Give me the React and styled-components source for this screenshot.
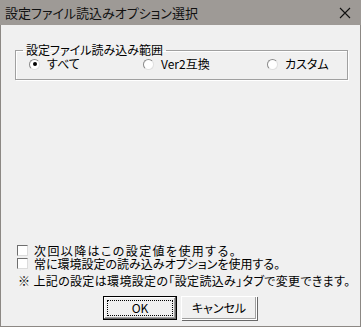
import React from "react";
import styled, { createGlobalStyle } from "styled-components";

const GlobalStyle = createGlobalStyle`
  html, body { margin: 0; padding: 0; background: #f0f0f0; }
  body { font-family: "Noto Sans CJK JP", sans-serif; }
`;

const Frame = styled.div`
  width: 361px;
  height: 327px;
  box-sizing: border-box;
  display: flex;
  flex-direction: column;
  background: #f0f0f0;
  border: 1px solid #8c8884;
  border-top: none;
`;

const TitleBar = styled.div`
  height: 25px;
  flex: none;
  display: flex;
  align-items: center;
  justify-content: space-between;
  background: #9e9a96;
  margin: 0 -1px;
  padding: 0 10px 0 5px;
  color: #111;
  font-family: "Noto Sans CJK JP", sans-serif;
  font-feature-settings: "palt" 1;
  font-size: 13px;
`;

const Body = styled.div`
  flex: 1;
  display: flex;
  flex-direction: column;
  padding: 18px 15px 6px 14px;
  font-family: "Noto Sans CJK JP", sans-serif;
  font-feature-settings: "palt" 1;
  font-size: 12px;
  color: #000;
`;

const Group = styled.fieldset`
  margin: 0;
  padding: 0 0 2px 13px;
  border: 1px solid #a0a0a0;
  box-shadow: 1px 1px 0 #fff, inset 1px 1px 0 #fff;
  height: 33px;
  display: flex;
  align-items: center;
  legend {
    padding: 0 3px;
    margin-left: -6px;
    line-height: 14px;
  }
`;

const RadioLabel = styled.label`
  display: flex;
  align-items: center;
  gap: 7px;
  width: ${(p) => p.w}px;
  line-height: 14px;
`;

const RadioDot = styled.span`
  width: 11px;
  height: 11px;
  box-sizing: border-box;
  border-radius: 50%;
  border: 1px solid #8a8a8a;
  border-bottom-color: #e0e0e0;
  border-right-color: #e0e0e0;
  background: #fff;
  display: flex;
  align-items: center;
  justify-content: center;
  &::after {
    content: "";
    width: 4px;
    height: 4px;
    border-radius: 50%;
    background: ${(p) => (p.on ? "#000" : "transparent")};
  }
`;

const Spacer = styled.div`
  flex: 1;
`;

const CheckRow = styled.div`
  display: flex;
  align-items: center;
  gap: 6px;
  margin-left: 2px;
  height: 13px;
  line-height: 13px;
  white-space: nowrap;
  letter-spacing: ${(p) => p.spread || 0}px;
`;

const CheckBox = styled.span`
  width: 11px;
  height: 11px;
  box-sizing: border-box;
  background: #fff;
  border: 1px solid #6e6e6e;
  border-bottom-color: #dcdcdc;
  border-right-color: #dcdcdc;
`;

const Note = styled.div`
  margin: 4px 0 0 3px;
  line-height: 13px;
  white-space: nowrap;
  letter-spacing: 0.35px;
`;

const Buttons = styled.div`
  display: flex;
  justify-content: center;
  gap: 4px;
  margin-top: 9px;
`;

const Button = styled.button`
  width: ${(p) => p.w}px;
  height: 24px;
  box-sizing: border-box;
  padding: 0;
  font-family: "Noto Sans CJK JP", sans-serif;
  font-feature-settings: "palt" 1;
  font-size: 12px;
  color: #000;
  background: #f0f0f0;
  border: 1px solid ${(p) => (p.primary ? "#000" : "#fff")};
  box-shadow: ${(p) =>
    p.primary
      ? "inset -1px -1px 0 #696969, inset 1px 1px 0 #fff, inset -2px -2px 0 #a0a0a0"
      : "1px 1px 0 #696969, inset -1px -1px 0 #a0a0a0"};
  display: flex;
  align-items: center;
  justify-content: center;
  position: relative;
  span {
    line-height: 14px;
  }
  &::after {
    content: "";
    display: ${(p) => (p.primary ? "block" : "none")};
    position: absolute;
    inset: 3px;
    border: 1px dotted #000;
  }
`;

const Close = () => (
  <svg width="12" height="12" viewBox="0 0 12 12">
    <path d="M1 1 L11 11 M11 1 L1 11" stroke="#111" strokeWidth="1.1" />
  </svg>
);

export default function App() {
  return (
    <>
      <GlobalStyle />
      <Frame>
        <TitleBar>
          <span>設定ファイル読込みオプション選択</span>
          <Close />
        </TitleBar>
        <Body>
          <Group>
            <legend>設定ファイル読み込み範囲</legend>
            <RadioLabel w={114}>
              <RadioDot on />
              すべて
            </RadioLabel>
            <RadioLabel w={124}>
              <RadioDot />
              Ver2互換
            </RadioLabel>
            <RadioLabel w={80}>
              <RadioDot />
              カスタム
            </RadioLabel>
          </Group>
          <Spacer />
          <CheckRow spread={1.4}>
            <CheckBox />
            次回以降はこの設定値を使用する。
          </CheckRow>
          <CheckRow>
            <CheckBox />
            常に環境設定の読み込みオプションを使用する。
          </CheckRow>
          <Note>※ 上記の設定は環境設定の「設定読込み」タブで変更できます。</Note>
          <Buttons>
            <Button primary w={74}>
              <span>OK</span>
            </Button>
            <Button w={76}>
              <span>キャンセル</span>
            </Button>
          </Buttons>
        </Body>
      </Frame>
    </>
  );
}
